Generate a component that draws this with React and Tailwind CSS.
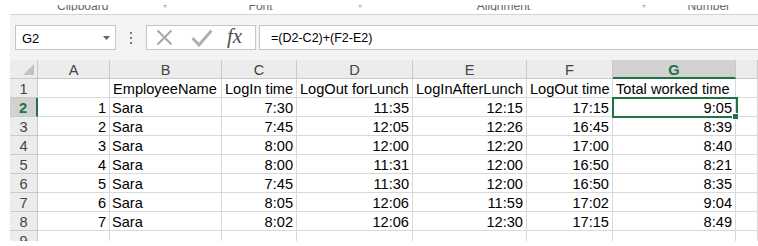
import React from "react";

const rows = [
  [1, "Sara", "7:30", "11:35", "12:15", "17:15", "9:05"],
  [2, "Sara", "7:45", "12:05", "12:26", "16:45", "8:39"],
  [3, "Sara", "8:00", "12:00", "12:20", "17:00", "8:40"],
  [4, "Sara", "8:00", "11:31", "12:00", "16:50", "8:21"],
  [5, "Sara", "7:45", "11:30", "12:00", "16:50", "8:35"],
  [6, "Sara", "8:05", "12:06", "11:59", "17:02", "9:04"],
  [7, "Sara", "8:02", "12:06", "12:30", "17:15", "8:49"],
];

const headers = ["EmployeeName", "LogIn time", "LogOut forLunch", "LogInAfterLunch", "LogOut time", "Total worked time"];
const letters = ["A", "B", "C", "D", "E", "F", "G", ""];

const cellBase =
  "h-[19px] box-border border-b border-r border-[#d9d9d9] flex items-end leading-[16px] whitespace-nowrap overflow-hidden bg-white text-black";
const hdrBase =
  "h-[19px] box-border border-b border-r border-[#c9c9c9] flex items-end justify-center leading-[16px] bg-[#ececec] text-[#444]";
const rowHdr =
  "h-[19px] box-border border-b border-r border-[#c9c9c9] flex items-end justify-center leading-[16px] bg-[#ececec] text-[#444]";

function RowHeader({ n, selected }) {
  if (selected) {
    return (
      <div className="h-[19px] box-border border-b border-[#c9c9c9] border-r-2 border-r-[#217346] flex items-end justify-center leading-[16px] bg-[#d2d2d2] text-[#217346] font-bold">
        {n}
      </div>
    );
  }
  return <div className={rowHdr}>{n}</div>;
}

export default function App() {
  return (
    <div
      className="w-[758px] h-[246px] bg-white overflow-hidden flex flex-col"
      style={{ fontFamily: '"Liberation Sans", Arial, sans-serif' }}
    >
      {/* ribbon group labels (cut off) */}
      <div className="h-[14px] pl-[10px] relative">
        <div className="mt-[5px] h-[6px] overflow-hidden relative text-[12px] leading-[12px] text-[#666]">
          <div className="-mt-[5px] flex items-start">
            <span className="ml-[47px]">Clipboard</span>
            <span className="ml-[55px] text-[9px]">▫</span>
            <span className="ml-[82px]">Font</span>
            <span className="ml-[86px] text-[9px]">▫</span>
            <span className="ml-[115px]">Alignment</span>
            <span className="ml-[112px] text-[9px]">▫</span>
            <span className="ml-[42px]">Number</span>
          </div>
        </div>
      </div>

      {/* formula bar area */}
      <div className="pl-[10px]">
        <div className="h-[46px] bg-[#f3f3f3] border-t border-[#d5d5d5] flex items-start pt-[10px]">
          {/* name box */}
          <div className="ml-[5px] w-[101px] h-[25px] box-border bg-white border border-[#c6c6c6] flex items-center justify-between pl-[6px] pr-[5px]">
            <span className="text-[13px] leading-[15px] text-black mt-[1px]">G2</span>
            <svg width="7" height="4" viewBox="0 0 7 4">
              <path d="M0 0 L7 0 L3.5 4 Z" fill="#666" />
            </svg>
          </div>
          {/* dots */}
          <div className="ml-[14px] w-[2px] h-[25px] flex flex-col justify-center gap-[3px]">
            <div className="w-[2px] h-[2px] bg-[#777]" />
            <div className="w-[2px] h-[2px] bg-[#777]" />
            <div className="w-[2px] h-[2px] bg-[#777]" />
          </div>
          {/* function buttons */}
          <div className="ml-[14px] w-[110px] h-[25px] box-border bg-white border border-[#c6c6c6] flex items-center">
            <svg className="ml-[9px]" width="17" height="17" viewBox="0 0 17 17">
              <path d="M1.5 1.5 L15.5 15.5 M15.5 1.5 L1.5 15.5" stroke="#a8a8a8" strokeWidth="2" fill="none" />
            </svg>
            <svg className="ml-[18px]" width="22" height="18" viewBox="0 0 22 18">
              <path d="M1.5 9 L8 16 L20.5 1.5" stroke="#b0b0b0" strokeWidth="3" fill="none" strokeLinejoin="miter" />
            </svg>
            <span
              className="ml-[14px] italic text-[21px] leading-[21px] text-[#505050] -mt-[2px]"
              style={{ fontFamily: '"Liberation Serif", "Times New Roman", serif' }}
            >
              fx
            </span>
          </div>
          {/* formula input */}
          <div className="ml-[3px] flex-1 h-[25px] box-border bg-white border border-r-0 border-[#c6c6c6] flex items-center pl-[11px]">
            <span className="text-[12.5px] leading-[15px] text-black mt-[1px]">=(D2-C2)+(F2-E2)</span>
          </div>
        </div>
      </div>

      {/* grid */}
      <div className="pl-[10px]">
        <div className="relative h-[181px] overflow-hidden text-[14.6px]">
          <div className="grid grid-cols-[28px_72px_112px_75px_116px_114px_86px_123px_1fr]">
            {/* corner */}
            <div className="h-[19px] box-border border-b border-r border-[#c9c9c9] bg-[#ececec] flex items-end justify-end pr-[3px] pb-[3px]">
              <svg width="11" height="11" viewBox="0 0 11 11">
                <path d="M11 0 L11 11 L0 11 Z" fill="#c3c3c3" />
              </svg>
            </div>
            {letters.map((l, i) =>
              l === "G" ? (
                <div
                  key={i}
                  className="h-[19px] box-border border-r border-[#c9c9c9] border-b-2 border-b-[#217346] flex items-end justify-center leading-[16px] bg-[#d2d2d2] text-[#217346] font-bold"
                >
                  <span className="mb-[-1px]">G</span>
                </div>
              ) : (
                <div key={i} className={hdrBase}>
                  {l}
                </div>
              )
            )}

            {/* row 1 */}
            <RowHeader n={1} />
            <div className={cellBase} />
            {headers.map((h, i) => (
              <div key={i} className={cellBase + " pl-[3px]"}>
                {h}
              </div>
            ))}
            <div className={cellBase} />

            {rows.map((r, ri) => (
              <React.Fragment key={ri}>
                <RowHeader n={ri + 2} selected={ri === 0} />
                <div className={cellBase + " justify-end pr-[3px]"}>{r[0]}</div>
                <div className={cellBase + " pl-[2px]"}>{r[1]}</div>
                <div className={cellBase + " justify-end pr-[3px]"}>{r[2]}</div>
                <div className={cellBase + " justify-end pr-[3px]"}>{r[3]}</div>
                <div className={cellBase + " justify-end pr-[3px]"}>{r[4]}</div>
                <div className={cellBase + " justify-end pr-[3px]"}>{r[5]}</div>
                <div className={cellBase + " justify-end pr-[3px]"}>{r[6]}</div>
                <div className={cellBase} />
              </React.Fragment>
            ))}

            {/* row 9 (partially visible) */}
            <RowHeader n={9} />
            {letters.map((l, i) => (
              <div key={i} className={cellBase} />
            ))}
          </div>

          {/* active cell selection */}
          <div className="absolute left-[602px] top-[37px] w-[126px] h-[21px] border-2 border-[#217346] pointer-events-none" />
          <div className="absolute left-[722px] top-[53px] w-[7px] h-[7px] bg-[#217346] border border-white" />
        </div>
      </div>
    </div>
  );
}
